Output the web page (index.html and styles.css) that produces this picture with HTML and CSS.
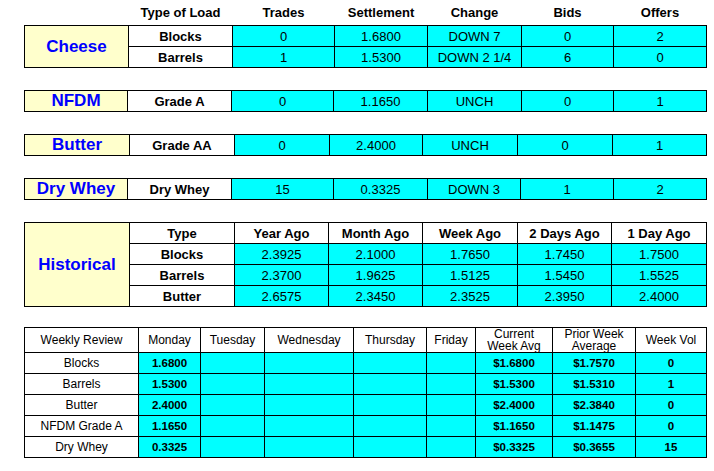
FILE: index.html
```html
<!DOCTYPE html>
<html>
<head>
<meta charset="utf-8">
<title>Dairy Market</title>
<link rel="stylesheet" href="styles.css">
</head>
<body>
<div class="page">
  <table class="board t-cheese">
    <colgroup><col class="c1"><col class="c2"><col class="c3"><col class="c4"><col class="c5"><col class="c6"><col class="c7"></colgroup>
    <thead>
      <tr class="head"><th></th><th>Type of Load</th><th>Trades</th><th>Settlement</th><th>Change</th><th>Bids</th><th>Offers</th></tr>
    </thead>
    <tbody>
      <tr><td class="product" rowspan="2">Cheese</td><td class="type">Blocks</td><td class="val">0</td><td class="val">1.6800</td><td class="val">DOWN 7</td><td class="val">0</td><td class="val">2</td></tr>
      <tr><td class="type">Barrels</td><td class="val">1</td><td class="val">1.5300</td><td class="val">DOWN 2 1/4</td><td class="val">6</td><td class="val">0</td></tr>
    </tbody>
  </table>

  <table class="board gap t-nfdm">
    <colgroup><col class="c1"><col class="c2"><col class="c3"><col class="c4"><col class="c5"><col class="c6"><col class="c7"></colgroup>
    <tr><td class="product">NFDM</td><td class="type">Grade A</td><td class="val">0</td><td class="val">1.1650</td><td class="val">UNCH</td><td class="val">0</td><td class="val">1</td></tr>
  </table>

  <table class="board gap t-butter">
    <colgroup><col class="c1"><col class="c2"><col class="c3"><col class="c4"><col class="c5"><col class="c6"><col class="c7"></colgroup>
    <tr><td class="product">Butter</td><td class="type">Grade AA</td><td class="val">0</td><td class="val">2.4000</td><td class="val">UNCH</td><td class="val">0</td><td class="val">1</td></tr>
  </table>

  <table class="board gap t-whey">
    <colgroup><col class="c1"><col class="c2"><col class="c3"><col class="c4"><col class="c5"><col class="c6"><col class="c7"></colgroup>
    <tr><td class="product">Dry Whey</td><td class="type">Dry Whey</td><td class="val">15</td><td class="val">0.3325</td><td class="val">DOWN 3</td><td class="val">1</td><td class="val">2</td></tr>
  </table>

  <table class="board gap t-hist">
    <colgroup><col class="c1"><col class="c2"><col class="c3"><col class="c4"><col class="c5"><col class="c6"><col class="c7"></colgroup>
    <tr><td class="product" rowspan="4">Historical</td><td class="type">Type</td><td class="type">Year Ago</td><td class="type">Month Ago</td><td class="type">Week Ago</td><td class="type">2 Days Ago</td><td class="type">1 Day Ago</td></tr>
    <tr><td class="type">Blocks</td><td class="val">2.3925</td><td class="val">2.1000</td><td class="val">1.7650</td><td class="val">1.7450</td><td class="val">1.7500</td></tr>
    <tr><td class="type">Barrels</td><td class="val">2.3700</td><td class="val">1.9625</td><td class="val">1.5125</td><td class="val">1.5450</td><td class="val">1.5525</td></tr>
    <tr><td class="type">Butter</td><td class="val">2.6575</td><td class="val">2.3450</td><td class="val">2.3525</td><td class="val">2.3950</td><td class="val">2.4000</td></tr>
  </table>

  <table class="weekly">
    <colgroup><col class="w1"><col class="w2"><col class="w3"><col class="w4"><col class="w5"><col class="w6"><col class="w7"><col class="w8"><col class="w9"></colgroup>
    <tr class="whead"><th>Weekly Review</th><th>Monday</th><th>Tuesday</th><th>Wednesday</th><th>Thursday</th><th>Friday</th><th>Current<br>Week Avg</th><th>Prior Week<br>Average</th><th>Week Vol</th></tr>
    <tr><td class="wlabel">Blocks</td><td class="wval">1.6800</td><td class="wval"></td><td class="wval"></td><td class="wval"></td><td class="wval"></td><td class="wval">$1.6800</td><td class="wval">$1.7570</td><td class="wval">0</td></tr>
    <tr><td class="wlabel">Barrels</td><td class="wval">1.5300</td><td class="wval"></td><td class="wval"></td><td class="wval"></td><td class="wval"></td><td class="wval">$1.5300</td><td class="wval">$1.5310</td><td class="wval">1</td></tr>
    <tr><td class="wlabel">Butter</td><td class="wval">2.4000</td><td class="wval"></td><td class="wval"></td><td class="wval"></td><td class="wval"></td><td class="wval">$2.4000</td><td class="wval">$2.3840</td><td class="wval">0</td></tr>
    <tr><td class="wlabel">NFDM Grade A</td><td class="wval">1.1650</td><td class="wval"></td><td class="wval"></td><td class="wval"></td><td class="wval"></td><td class="wval">$1.1650</td><td class="wval">$1.1475</td><td class="wval">0</td></tr>
    <tr><td class="wlabel">Dry Whey</td><td class="wval">0.3325</td><td class="wval"></td><td class="wval"></td><td class="wval"></td><td class="wval"></td><td class="wval">$0.3325</td><td class="wval">$0.3655</td><td class="wval">15</td></tr>
  </table>
</div>
</body>
</html>
```

FILE: styles.css
```css
body {
  margin: 0;
  background: #ffffff;
  color: #000000;
  font-family: "Liberation Sans", Arial, sans-serif;
}

.page {
  display: flex;
  flex-direction: column;
  align-items: flex-start;
  padding-left: 24px;
}

table {
  border-collapse: collapse;
  table-layout: fixed;
  width: 682px;
}

.board {
  font-size: 13px;
}

.board.gap {
  margin-top: 22px;
}

.board td {
  border: 1px solid #000000;
  padding: 0;
  height: 20px;
  text-align: center;
  vertical-align: middle;
  white-space: nowrap;
}

.head th {
  height: 24px;
  padding: 0 0 1px;
  border: none;
  font-weight: bold;
  text-align: center;
  vertical-align: middle;
  white-space: nowrap;
}

.product {
  background: #ffffcc;
  color: #0000ff;
  font-weight: bold;
  font-size: 17px;
}

.type {
  background: #ffffff;
  font-weight: bold;
}

.val {
  background: #00ffff;
}

/* column widths per table */
.t-cheese .c1 { width: 104px; }
.t-cheese .c2 { width: 104px; }
.t-cheese .c3 { width: 102px; }
.t-cheese .c4 { width: 93px; }
.t-cheese .c5 { width: 94px; }
.t-cheese .c6 { width: 92px; }
.t-cheese .c7 { width: 93px; }

.t-nfdm .c1 { width: 103px; }
.t-nfdm .c2 { width: 104px; }
.t-nfdm .c3 { width: 102px; }
.t-nfdm .c4 { width: 94px; }
.t-nfdm .c5 { width: 94px; }
.t-nfdm .c6 { width: 92px; }
.t-nfdm .c7 { width: 93px; }

.t-butter .c1 { width: 105px; }
.t-butter .c2 { width: 105px; }
.t-butter .c3 { width: 95px; }
.t-butter .c4 { width: 93px; }
.t-butter .c5 { width: 95px; }
.t-butter .c6 { width: 95px; }
.t-butter .c7 { width: 94px; }

.t-whey .c1 { width: 103px; }
.t-whey .c2 { width: 104px; }
.t-whey .c3 { width: 102px; }
.t-whey .c4 { width: 94px; }
.t-whey .c5 { width: 93px; }
.t-whey .c6 { width: 93px; }
.t-whey .c7 { width: 93px; }

.t-hist .c1 { width: 105px; }
.t-hist .c2 { width: 105px; }
.t-hist .c3 { width: 94px; }
.t-hist .c4 { width: 94px; }
.t-hist .c5 { width: 95px; }
.t-hist .c6 { width: 94px; }
.t-hist .c7 { width: 95px; }

/* weekly review */
.weekly {
  margin-top: 20px;
  font-size: 12px;
}

.weekly th,
.weekly td {
  border: 1px solid #000000;
  padding: 0;
  text-align: center;
  vertical-align: middle;
  white-space: nowrap;
}

.whead th {
  height: 24px;
  font-weight: normal;
  line-height: 12px;
  background: #ffffff;
}

.weekly td {
  height: 20px;
}

.wlabel {
  background: #ffffff;
}

.wval {
  background: #00ffff;
  font-weight: bold;
  font-size: 11.5px;
}

.w1 { width: 114px; }
.w2 { width: 62px; }
.w3 { width: 64px; }
.w4 { width: 89px; }
.w5 { width: 73px; }
.w6 { width: 49px; }
.w7 { width: 77px; }
.w8 { width: 83px; }
.w9 { width: 71px; }
```
